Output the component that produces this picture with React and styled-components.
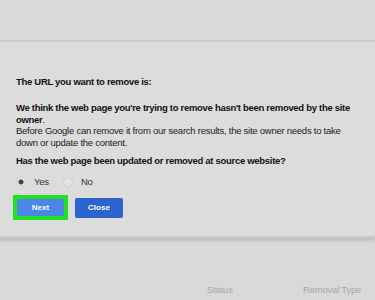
import React, { useState } from 'react';
import styled, { createGlobalStyle } from 'styled-components';

const Global = createGlobalStyle`
  html, body {
    margin : 0;
    padding : 0;
    background : #d9d9d9;
    font-family : "Liberation Sans", Arial, sans-serif;
  }
`

function App() {
  const [answer, setAnswer] = useState('yes');

  return (
    <Page>
      <Global />
      <TopBand />
      <Dialog>
        <Heading>The URL you want to remove is:</Heading>
        <Notice>
          <strong>We think the web page you're trying to remove hasn't been removed by the site owner</strong>.
          <br />
          Before Google can remove it from our search results, the site owner needs to take down or update the content.
        </Notice>
        <Question>Has the web page been updated or removed at source website?</Question>
        <Options>
          <Option>
            <Radio checked={answer === 'yes'} onClick={() => setAnswer('yes')} />
            Yes
          </Option>
          <Option>
            <Radio checked={answer === 'no'} onClick={() => setAnswer('no')} />
            No
          </Option>
        </Options>
        <Buttons>
          <Highlight>
            <Button light>Next</Button>
          </Highlight>
          <Button>Close</Button>
        </Buttons>
      </Dialog>
      <TableHead>
        <Column width="96px">Status</Column>
        <Column width="60px">Removal Type</Column>
      </TableHead>
    </Page>
  );
}

export default App;

const Page = styled.div`
  width : 375px;
  height : 300px;
  overflow : hidden;
  background : #d9d9d9;
`

const TopBand = styled.div`
  height : 40px;
  background : #d9d9d9;
  border-bottom : 2px solid #cbcbcb;
`

const Dialog = styled.div`
  background : #dcdcdc;
  padding : 34px 16px 16px 16px;
  box-shadow : 0 3px 3px rgba(0, 0, 0, 0.12);
  border-bottom : 2px solid #c9c9c9;
`

const Heading = styled.div`
  font-size : 9.5px;
  line-height : 11px;
  font-weight : bold;
  letter-spacing : -0.3px;
  color : #111;
  margin-bottom : 15px;
`

const Notice = styled.div`
  font-size : 9.5px;
  line-height : 11.5px;
  letter-spacing : -0.25px;
  color : #222;
  margin-bottom : 7px;

  strong {
    color : #111;
    letter-spacing : -0.3px;
  }
`

const Question = styled.div`
  font-size : 9.5px;
  line-height : 11px;
  font-weight : bold;
  letter-spacing : -0.3px;
  color : #111;
  margin-bottom : 10px;
`

const Options = styled.div`
  display : flex;
  gap : 14px;
  font-size : 9.5px;
  line-height : 11px;
  letter-spacing : -0.2px;
  color : #333;
  margin-bottom : 8px;
`

const Option = styled.label`
  display : flex;
  align-items : center;
  gap : 8px;
`

const Radio = styled.span`
  width : 8px;
  height : 8px;
  border-radius : 50%;
  background : ${p => p.checked ? 'radial-gradient(circle, #444 0 2px, #e6e6e6 3px)' : '#e2e2e2'};
  border : 1px solid ${p => p.checked ? '#d0d0d0' : '#cfcfcf'};
`

const Buttons = styled.div`
  display : flex;
  align-items : center;
  gap : 7px;
  margin-left : -3px;
`

const Highlight = styled.div`
  padding : 4px;
  background : #22e022;
  display : flex;
`

const Button = styled.button`
  width : ${p => p.light ? '47px' : '48px'};
  height : ${p => p.light ? '17px' : '20px'};
  border : none;
  border-radius : 2px;
  background : ${p => p.light ? '#4a86e8' : '#2a64cc'};
  color : #fff;
  font-family : "Liberation Sans", Arial, sans-serif;
  font-size : 8px;
  font-weight : bold;
  padding : 0;
`

const TableHead = styled.div`
  display : flex;
  justify-content : flex-end;
  padding : 46px 12px 0 0;
`

const Column = styled.div`
  width : ${p => p.width};
  font-size : 9.5px;
  line-height : 12px;
  letter-spacing : -0.2px;
  color : #a8a8a8;
  white-space : nowrap;
`
